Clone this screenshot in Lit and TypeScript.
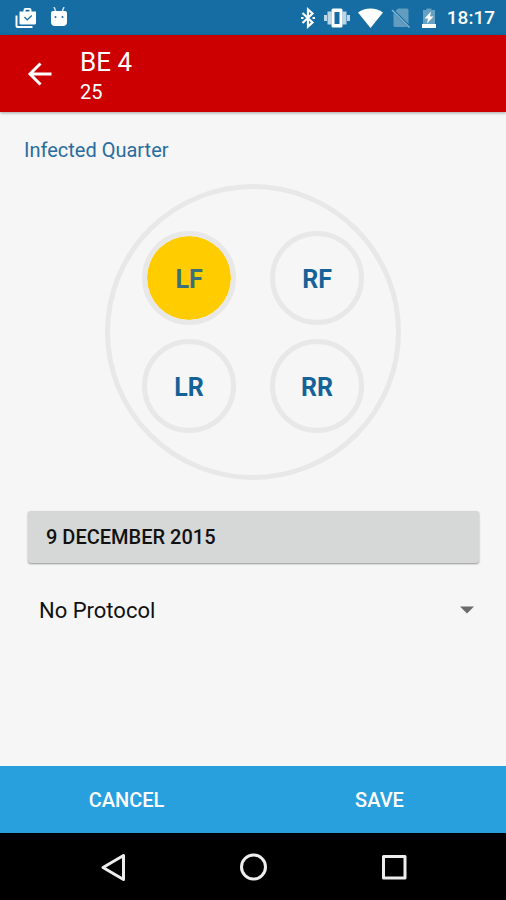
import { LitElement, html, css } from "lit";
import { customElement, state } from "lit/decorators.js";

const QUARTERS = [
  { id: "LF", name: "Left front" },
  { id: "RF", name: "Right front" },
  { id: "LR", name: "Left rear" },
  { id: "RR", name: "Right rear" },
];

@customElement("status-bar")
class StatusBar extends LitElement {
  static styles = css`
    :host {
      display: flex;
      align-items: center;
      justify-content: space-between;
      height: 35px;
      padding: 0 11px 0 15px;
      background: #156da3;
      color: #fff;
    }
    .group {
      display: flex;
      align-items: center;
    }
    .left {
      gap: 13px;
    }
    .right {
      gap: 8px;
    }
    svg {
      display: block;
      fill: currentColor;
    }
    .time {
      font-size: 19px;
      line-height: 24px;
      font-weight: 500;
    }
  `;

  render() {
    return html`
      <div class="group left">
        <svg width="22" height="22" viewBox="0 0 22 22" aria-hidden="true">
          <path d="M0.500 8.500h2v10.500h15v2H2.500a2 2 0 0 1-2-2z" />
          <path
            fill-rule="evenodd"
            d="M4.500 4.500h4V3a2 2 0 0 1 2-2h4a2 2 0 0 1 2 2v1.500h4.500v11.500a1.500 1.500 0 0 1-1.500 1.500H6A1.500 1.500 0 0 1 4.500 16zM10.500 2.800v1.700h4V2.800zM9 10.600l3.200 3.200 5-4.800-.9-1-4.100 3.900-2.300-2.300z"
          />
        </svg>
        <svg width="18" height="22" viewBox="0 0 18 22" aria-hidden="true">
          <path d="M4 0l2 5M14 0l-2 5" stroke="#cfe3ef" stroke-width="1.500" />
          <path
            fill-rule="evenodd"
            d="M3 4h12A2 2 0 0 1 17 6V15a4 4 0 0 1-4 4H5a4 4 0 0 1-4-4V6A2 2 0 0 1 3 4zM5.500 9a1 1 0 1 0 0 2 1 1 0 0 0 0-2zM12.500 9a1 1 0 1 0 0 2 1 1 0 0 0 0-2z"
          />
        </svg>
      </div>
      <div class="group right">
        <svg width="16" height="22" viewBox="0 0 16 22" aria-hidden="true">
          <path
            d="M2.500 6l10 9.500L8 19.500V2.500l4.500 4L2.500 16"
            fill="none"
            stroke="#fff"
            stroke-width="2.200"
          />
          <path d="M1 10h2.500v2H1zM12.500 10H15v2h-2.500z" />
        </svg>
        <svg width="26" height="22" viewBox="0 0 26 22" aria-hidden="true">
          <path
            opacity=".72"
            d="M3.500 4.500h4v13h-4zM18.500 4.500h4v13h-4zM0 8h3v6H0zM23 8h3v6h-3z"
          />
          <path
            fill-rule="evenodd"
            d="M9 1.500h8A1.500 1.500 0 0 1 18.500 3v16a1.500 1.500 0 0 1-1.500 1.500H9A1.500 1.500 0 0 1 7.500 19V3A1.500 1.500 0 0 1 9 1.500zM10.500 5v12h5V5z"
          />
        </svg>
        <svg width="25" height="22" viewBox="0 0 25 22" aria-hidden="true">
          <path d="M12.500 21L0 5.500C3.500 2.800 8 1.500 12.500 1.500S21.500 2.800 25 5.500z" />
        </svg>
        <svg width="20" height="22" viewBox="0 0 20 22" aria-hidden="true">
          <path
            opacity=".33"
            d="M7 1.500h9a1.500 1.500 0 0 1 1.500 1.500v14L4.500 4zM2.500 6l14 14H4a1.500 1.500 0 0 1-1.500-1.500z"
          />
          <path opacity=".5" d="M1 3L18.500 20.500" stroke="#fff" stroke-width="1.500" />
        </svg>
        <svg width="20" height="22" viewBox="0 0 20 22" aria-hidden="true">
          <path opacity=".35" d="M4 3h3.500V1.500h5V3H16v14H4z" />
          <path d="M3 17h14v4H3z" />
          <path d="M12 4.500L5.500 11.500h3.500L8 16.500l6.500-7H11z" />
        </svg>
        <span class="time">18:17</span>
      </div>
    `;
  }
}

@customElement("quarter-picker")
class QuarterPicker extends LitElement {
  @state() selected = "LF";

  static styles = css`
    :host {
      display: block;
    }
    .udder {
      box-sizing: border-box;
      width: 296px;
      height: 296px;
      margin: 0 auto;
      border: 5px solid #e8e8e8;
      border-radius: 50%;
      display: grid;
      grid-template-columns: 94px 94px;
      place-content: center;
      gap: 14px 34px;
    }
    .quarter {
      box-sizing: border-box;
      height: 94px;
      padding: 4px 0 0;
      border: 5px solid #e8e8e8;
      border-radius: 50%;
      background: transparent;
      color: #156298;
      font: 700 25px/32px Roboto, sans-serif;
      cursor: pointer;
    }
    .quarter[aria-pressed="true"] {
      background: #fc0 padding-box;
      color: #3c6f7c;
    }
  `;

  render() {
    return html`
      <div class="udder" role="group" aria-label="Infected Quarter">
        ${QUARTERS.map(
          (q) => html`<button
            class="quarter"
            title=${q.name}
            aria-pressed=${this.selected === q.id ? "true" : "false"}
            @click=${() => (this.selected = q.id)}
          >${q.id}</button>`
        )}
      </div>
    `;
  }
}

@customElement("app-root")
class AppRoot extends LitElement {
  static styles = css`
    :host {
      display: flex;
      flex-direction: column;
      min-height: 100vh;
      background: #f6f6f6;
      font-family: Roboto, sans-serif;
    }
    button,
    select {
      margin: 0;
      border: 0;
      font-family: inherit;
      cursor: pointer;
    }
    svg {
      display: block;
    }
    .header {
      display: flex;
      align-items: center;
      gap: 24px;
      height: 77px;
      padding: 0 24px;
      background: #c00;
      color: #fff;
      box-shadow: 0 1px 3px rgba(0, 0, 0, 0.35);
    }
    .back {
      padding: 0;
      background: none;
      color: inherit;
    }
    .heading {
      padding-top: 4px;
    }
    .title {
      margin: 0;
      font-size: 26px;
      line-height: 32px;
      font-weight: 400;
    }
    .subtitle {
      margin: 0;
      font-size: 20px;
      line-height: 28px;
    }
    .content {
      flex: 1;
      display: flex;
      flex-direction: column;
      padding: 24px 24px 0;
    }
    .label {
      margin: 0 0 20px;
      color: #2a6c9e;
      font-size: 20px;
      line-height: 28px;
      font-weight: 400;
    }
    .date {
      margin: 31px 3px 0 4px;
      height: 52px;
      padding: 0 18px;
      border-radius: 3px;
      background: #d6d8d7;
      box-shadow: 0 1px 2px rgba(0, 0, 0, 0.4);
      color: #111;
      font-size: 20px;
      line-height: 24px;
      font-weight: 500;
      text-align: left;
    }
    .protocol {
      display: grid;
      align-items: center;
      margin-top: 23px;
    }
    .protocol select {
      grid-area: 1 / 1;
      appearance: none;
      width: 100%;
      height: 48px;
      padding: 0 40px 0 15px;
      background: transparent;
      color: #111;
      font-size: 22px;
    }
    .arrow {
      grid-area: 1 / 1;
      justify-self: end;
      margin-right: 8px;
      pointer-events: none;
    }
    .actions {
      display: grid;
      grid-template-columns: 1fr 1fr;
      height: 67px;
    }
    .action {
      background: #29a0de;
      color: #fff;
      font-size: 20px;
      line-height: 24px;
      font-weight: 500;
    }
    .nav {
      display: flex;
      justify-content: center;
      gap: 108px;
      align-items: center;
      height: 67px;
      background: #000;
    }
    .nav button {
      padding: 0;
      background: none;
    }
    .nav svg {
      fill: none;
      stroke: #eee;
      stroke-width: 3;
      stroke-linejoin: round;
    }
  `;

  render() {
    return html`
      <status-bar></status-bar>
      <header class="header">
        <button class="back" aria-label="Back">
          <svg width="32" height="32" viewBox="0 0 32 32" fill="none" stroke="#fff" stroke-width="3">
            <path d="M27.500 16H7M16.500 5.500L6 16l10.500 10.500" />
          </svg>
        </button>
        <div class="heading">
          <h1 class="title">BE 4</h1>
          <p class="subtitle">25</p>
        </div>
      </header>
      <main class="content">
        <h2 class="label">Infected Quarter</h2>
        <quarter-picker></quarter-picker>
        <button class="date">9 DECEMBER 2015</button>
        <div class="protocol">
          <select aria-label="Protocol">
            <option>No Protocol</option>
          </select>
          <svg class="arrow" width="14" height="8" viewBox="0 0 14 8" aria-hidden="true">
            <path d="M0 0.500h14l-7 7z" fill="#6a6a6a" />
          </svg>
        </div>
      </main>
      <div class="actions">
        <button class="action">CANCEL</button>
        <button class="action">SAVE</button>
      </div>
      <nav class="nav" aria-label="System">
        <button aria-label="Back">
          <svg width="32" height="32" viewBox="0 0 32 32"><path d="M26.500 4.500v24L6 16.500z" /></svg>
        </button>
        <button aria-label="Home">
          <svg width="32" height="32" viewBox="0 0 32 32"><circle cx="16.500" cy="16" r="12" /></svg>
        </button>
        <button aria-label="Recent apps">
          <svg width="32" height="32" viewBox="0 0 32 32"><path d="M6.500 5.500h21.500v21.500H6.500z" /></svg>
        </button>
      </nav>
    `;
  }
}
